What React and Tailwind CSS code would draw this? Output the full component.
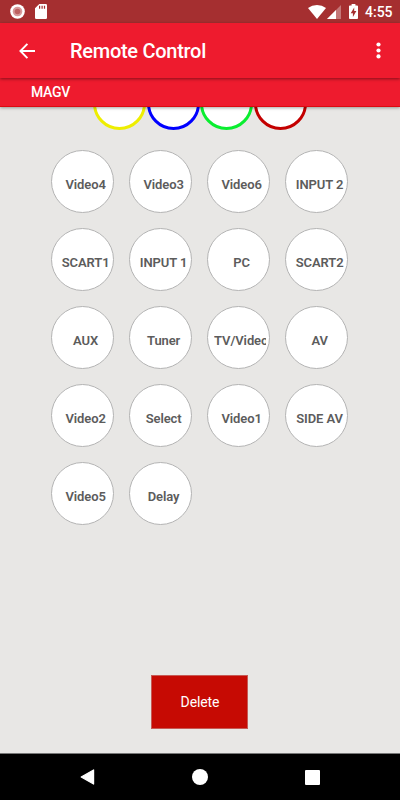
const COLOR_KEYS = [
  { id: "yellow", border: "border-[#eeee00]" },
  { id: "blue", border: "border-[#0000ff]" },
  { id: "green", border: "border-[#0aee30]" },
  { id: "red", border: "border-[#c40000]" },
];

const INPUT_KEYS = [
  "Video4", "Video3", "Video6", "INPUT 2",
  "SCART1", "INPUT 1", "PC", "SCART2",
  "AUX", "Tuner", "TV/Video", "AV",
  "Video2", "Select", "Video1", "SIDE AV",
  "Video5", "Delay",
];

function StatusBar() {
  return (
    <div className="h-[23px] shrink-0 bg-[#a52f30] flex items-center text-white">
      <svg className="ml-[10px]" width="15" height="15" viewBox="0 0 15 15">
        <circle cx="7.5" cy="7.5" r="7.3" fill="#fff" />
        <circle cx="7.5" cy="7.5" r="4.8" fill="#d79a9b" />
        <circle cx="7.5" cy="7.5" r="2.8" fill="#bd6060" />
      </svg>
      <svg className="ml-[10px]" width="12" height="15" viewBox="0 0 12 15">
        <path d="M4.3 0H10.8Q12 0 12 1.2V13.8Q12 15 10.8 15H1.2Q0 15 0 13.8V4.3Z" fill="#fff" />
        <path d="M4.6 1.8V4.8M7.1 1.8V4.8M9.5 1.8V4.8" stroke="#a52f30" strokeWidth="1.2" />
      </svg>
      <svg className="ml-auto" width="18" height="14" viewBox="0 0 18 14">
        <path d="M0 2.9Q4 0 9 0T18 2.9L9 14Z" fill="#fff" />
      </svg>
      <svg className="ml-[1px]" width="14" height="14" viewBox="0 0 14 14">
        <path d="M14 0V14H0Z" fill="#fff" fillOpacity="0.35" />
        <path d="M9 5V14H0Z" fill="#fff" />
      </svg>
      <svg className="ml-[8px]" width="9" height="15" viewBox="0 0 9 15">
        <path d="M2.6 0H6.4V1.4H8.1Q9 1.4 9 2.3V14.1Q9 15 8.1 15H.9Q0 15 0 14.1V2.3Q0 1.4 .9 1.4H2.6Z" fill="#fff" />
        <path d="M5.2 3.5V7H7.4L3.9 13V9.2H1.7Z" fill="#a52f30" />
      </svg>
      <span className="ml-[7px] mr-[7px] mt-px w-[28px] whitespace-nowrap text-[14px] leading-none font-medium">4:55</span>
    </div>
  );
}

function Toolbar() {
  return (
    <header className="relative z-20 h-[55px] shrink-0 bg-[#ee1b2e] flex items-center text-white shadow-[0_1px_3px_rgba(0,0,0,0.45)]">
      <button className="ml-[19px]" aria-label="Back">
        <svg width="16" height="16" viewBox="0 0 16 16" fill="none" stroke="#fff" strokeWidth="1.9">
          <path d="M8.4 .8L1.4 8L8.4 15.2M1.4 8H16" />
        </svg>
      </button>
      <h1 className="ml-[35px] text-[20px] tracking-[-0.28px] leading-none font-medium">Remote Control</h1>
      <button className="ml-auto mr-[19px]" aria-label="More">
        <svg width="5" height="17" viewBox="0 0 5 17" fill="#fff">
          <circle cx="2.5" cy="2.5" r="2.1" />
          <circle cx="2.5" cy="8.5" r="2.1" />
          <circle cx="2.5" cy="14.4" r="2.1" />
        </svg>
      </button>
    </header>
  );
}

function InputKey({ label }) {
  // long labels start at the edge of the text box and are cut off on the right
  const long = label.length > 7;
  return (
    <button className="size-[63px] rounded-full border border-[#b4b4b4] bg-white pl-[6px] pt-[7px] text-[#5c5c5c]">
      <span
        className={`block w-[52px] overflow-hidden whitespace-nowrap text-[13px] tracking-[-0.1px] leading-[18px] font-semibold ${
          long ? "text-left" : "pl-[3px] text-center"
        }`}
      >
        {label}
      </span>
    </button>
  );
}

export default function App() {
  return (
    <div className="h-[800px] w-[400px] overflow-hidden flex flex-col bg-[#e8e7e5] font-[Roboto,sans-serif]">
      <StatusBar />
      <Toolbar />
      <div className="relative z-10 h-[29px] shrink-0 bg-[#ee1b2e] border-b border-[#dc0a10] pl-[31px] pt-px flex items-center text-[14px] tracking-[-0.3px] font-medium text-white shadow-[0_1px_3px_rgba(0,0,0,0.35)]">
        MAGV
      </div>

      <main className="flex-1 min-h-0 overflow-hidden flex flex-col items-center">
        <div className="-mt-[29.7px] flex gap-[0.6px]">
          {COLOR_KEYS.map((k) => (
            <button key={k.id} aria-label={k.id} className={`size-[53px] rounded-full border-3 bg-white ${k.border}`} />
          ))}
        </div>

        <div className="mt-[20.1px] mr-[0.8px] grid grid-cols-4 gap-x-[15px] gap-y-[14.8px]">
          {INPUT_KEYS.map((label) => (
            <InputKey key={label} label={label} />
          ))}
        </div>

        <button className="mt-auto mb-[24px] mr-px h-[54px] w-[97px] border border-[#c65a55] bg-[#c60a03] pl-px pt-px text-[14px] tracking-[-0.1px] text-white">
          Delete
        </button>
      </main>

      <nav className="h-[47px] shrink-0 border-t border-[#777] bg-black flex items-center">
        <svg className="ml-[80px]" width="15" height="16" viewBox="0 0 15 16">
          <path d="M13.6 .9V15.1L1.2 8Z" fill="#fff" stroke="#fff" strokeWidth="1.2" strokeLinejoin="round" />
        </svg>
        <div className="ml-[97px] size-4 rounded-full bg-white" />
        <div className="ml-[97px] size-[15px] rounded-[1px] bg-white" />
      </nav>
    </div>
  );
}
